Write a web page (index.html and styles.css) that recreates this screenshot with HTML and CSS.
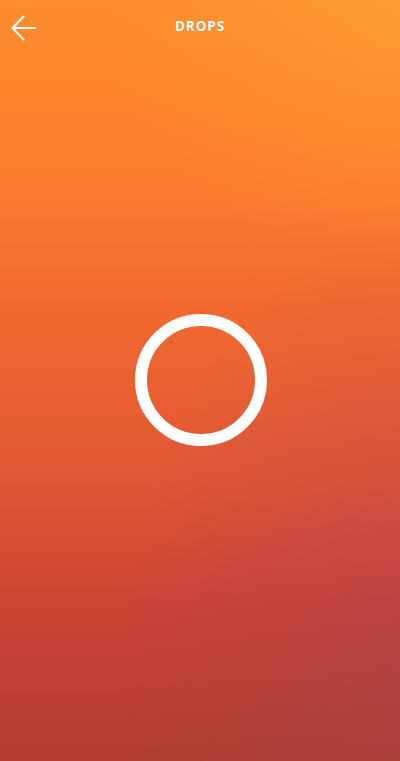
FILE: index.html
```html
<!DOCTYPE html>
<html lang="en">
<head>
<meta charset="utf-8">
<title>Drops</title>
<link rel="stylesheet" href="styles.css">
</head>
<body>
<div class="screen">
  <header class="topbar">
    <button class="back" aria-label="Back">
      <svg width="26" height="26" viewBox="0 0 26 26" fill="none" stroke="#fff" stroke-width="2" stroke-linecap="round" stroke-linejoin="round">
        <path d="M24.5 13H1.5"/>
        <path d="M12.5 1.5L1.5 13L12.5 24.5"/>
      </svg>
    </button>
    <h1 class="title">DROPS</h1>
    <span class="spacer"></span>
  </header>
  <main class="stage">
    <div class="ring"></div>
  </main>
</div>
</body>
</html>
```
FILE: styles.css
```css
html, body {
  margin: 0;
  padding: 0;
}
body {
  width: 400px;
  height: 761px;
  overflow: hidden;
  font-family: "Open Sans", "Liberation Sans", sans-serif;
}
.screen {
  width: 400px;
  height: 761px;
  display: flex;
  flex-direction: column;
  background:
    radial-gradient(ellipse 300px 420px at 420px 650px, rgba(150, 65, 100, 0.3), rgba(150, 65, 100, 0) 100%),
    radial-gradient(ellipse 320px 260px at 420px 0px, rgba(255, 175, 55, 0.45), rgba(255, 175, 55, 0) 100%),
    linear-gradient(to bottom, #fd8c2d 0%, #fb7a2f 26%, #f2692f 40%, #e15634 63%, #cb4434 79%, #b53e2f 97%, #b23c2e 100%);
}
.topbar {
  height: 54px;
  display: flex;
  align-items: center;
  justify-content: space-between;
  padding: 0 12px 0 11px;
}
.back {
  width: 26px;
  height: 26px;
  padding: 0;
  margin: 1px 0 0 0;
  border: 0;
  background: none;
  display: flex;
}
.title {
  margin: 0 0 0 1px;
  color: #fff;
  font-size: 13.5px;
  font-weight: 700;
  letter-spacing: 0.9px;
  line-height: 1;
}
.spacer {
  width: 26px;
}
.stage {
  flex: 1;
  display: flex;
  justify-content: center;
  align-items: flex-start;
}
.ring {
  margin-top: 260px;
  margin-left: 1px;
  width: 108px;
  height: 108px;
  border: 12px solid #fff;
  border-radius: 50%;
}
```
